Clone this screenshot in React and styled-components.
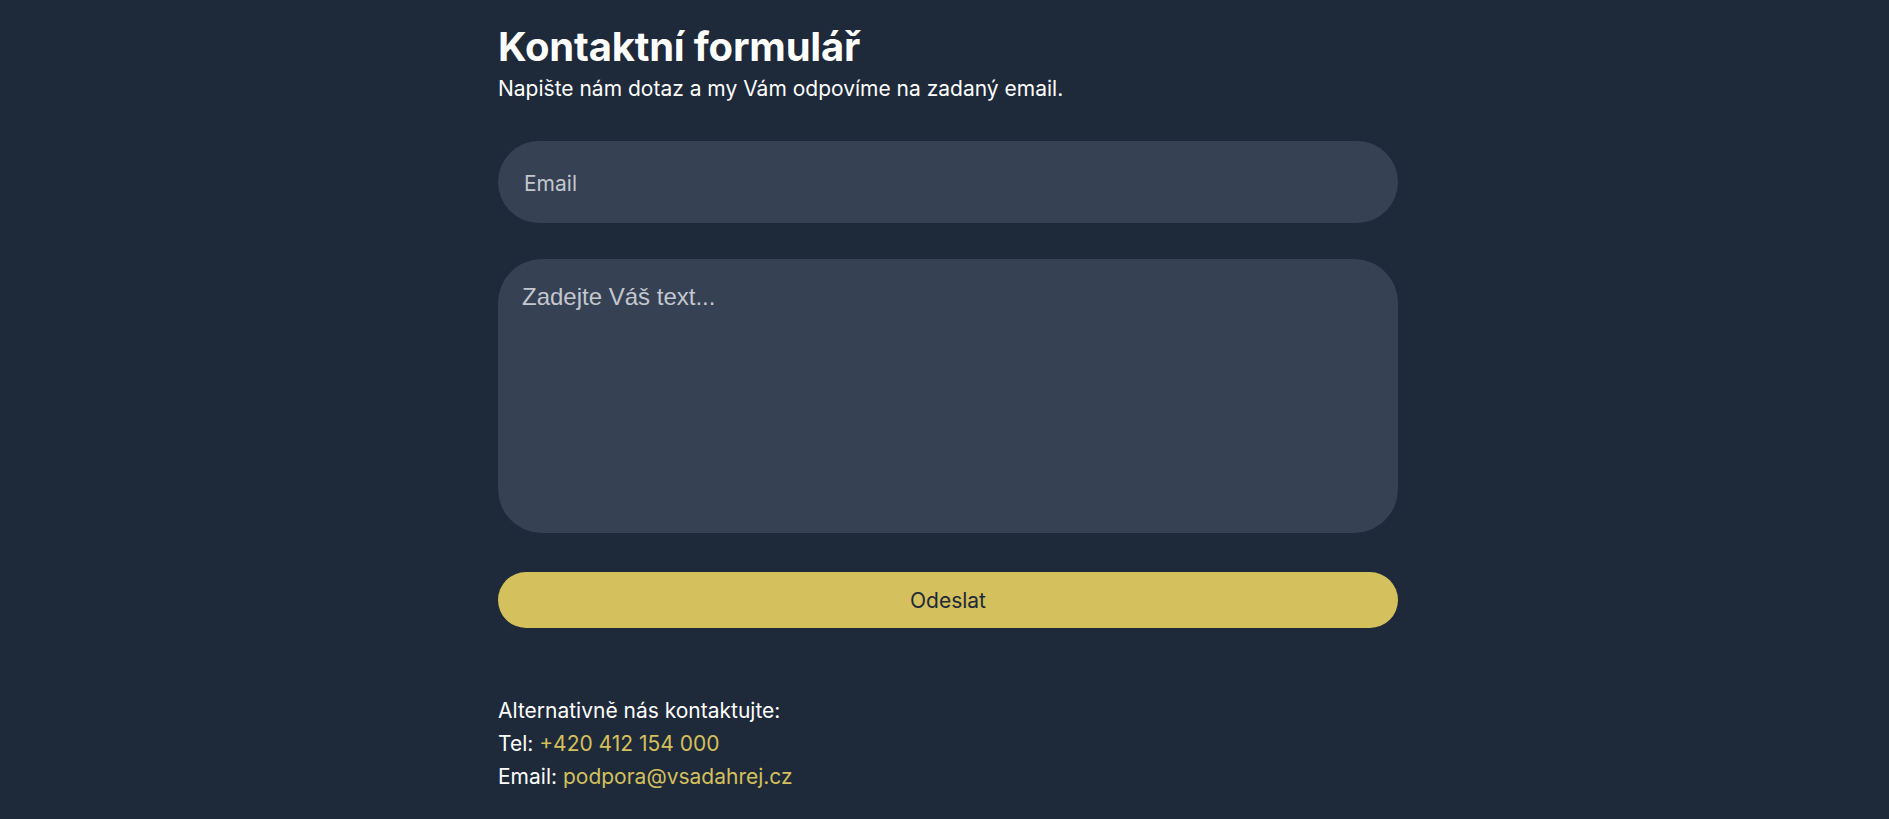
import React from "react";
import styled, { createGlobalStyle } from "styled-components";

const Global = createGlobalStyle`
  html, body { margin: 0; padding: 0; background: #1e2939; }
  body { font-family: Inter, "Noto Sans", sans-serif; color: #ffffff; }
  * { box-sizing: border-box; }
`;

const Page = styled.main`
  min-height: 819px;
  display: flex;
  justify-content: center;
  padding-left: 7px;
`;

const Column = styled.section`
  width: 900px;
  display: flex;
  flex-direction: column;
`;

const Title = styled.h1`
  margin: 23px 0 0;
  font-size: 40px;
  font-weight: 700;
  line-height: 48px;
  letter-spacing: -0.2px;
`;

const Lead = styled.p`
  margin: 3px 0 0;
  font-size: 21px;
  line-height: 30px;
`;

const Form = styled.form`
  margin-top: 37px;
  display: flex;
  flex-direction: column;
`;

const EmailInput = styled.input`
  height: 82px;
  border: none;
  border-radius: 41px;
  background: #364153;
  padding: 2px 26px 0;
  font-family: Inter, sans-serif;
  font-size: 21px;
  color: #fff;
  outline: none;
  &::placeholder { color: #c3c7cf; }
`;

const TextArea = styled.textarea`
  margin-top: 36px;
  height: 274px;
  border: none;
  border-radius: 44px;
  background: #364153;
  padding: 24px 24px;
  font-family: "Liberation Sans", Arial, sans-serif;
  font-size: 24px;
  color: #fff;
  resize: none;
  outline: none;
  &::placeholder { color: #c3c7cf; }
`;

const Submit = styled.button`
  margin-top: 39px;
  height: 56px;
  border: none;
  border-radius: 28px;
  background: #d4c05c;
  color: #1e2939;
  font-family: Inter, sans-serif;
  font-size: 21px;
  cursor: pointer;
`;

const Contact = styled.div`
  margin-top: 66px;
  font-size: 21px;
  line-height: 33px;
`;

const Line = styled.div``;

const Accent = styled.a`
  color: #d4c05c;
  text-decoration: none;
`;

export default function App() {
  return (
    <>
      <Global />
      <Page>
        <Column>
          <Title>Kontaktní formulář</Title>
          <Lead>Napište nám dotaz a my Vám odpovíme na zadaný email.</Lead>
          <Form onSubmit={(e) => e.preventDefault()}>
            <EmailInput type="email" placeholder="Email" />
            <TextArea placeholder="Zadejte Váš text..." />
            <Submit type="submit">Odeslat</Submit>
          </Form>
          <Contact>
            <Line>Alternativně nás kontaktujte:</Line>
            <Line>
              Tel: <Accent href="#">+420 412 154 000</Accent>
            </Line>
            <Line>
              Email: <Accent href="#">podpora@vsadahrej.cz</Accent>
            </Line>
          </Contact>
        </Column>
      </Page>
    </>
  );
}
